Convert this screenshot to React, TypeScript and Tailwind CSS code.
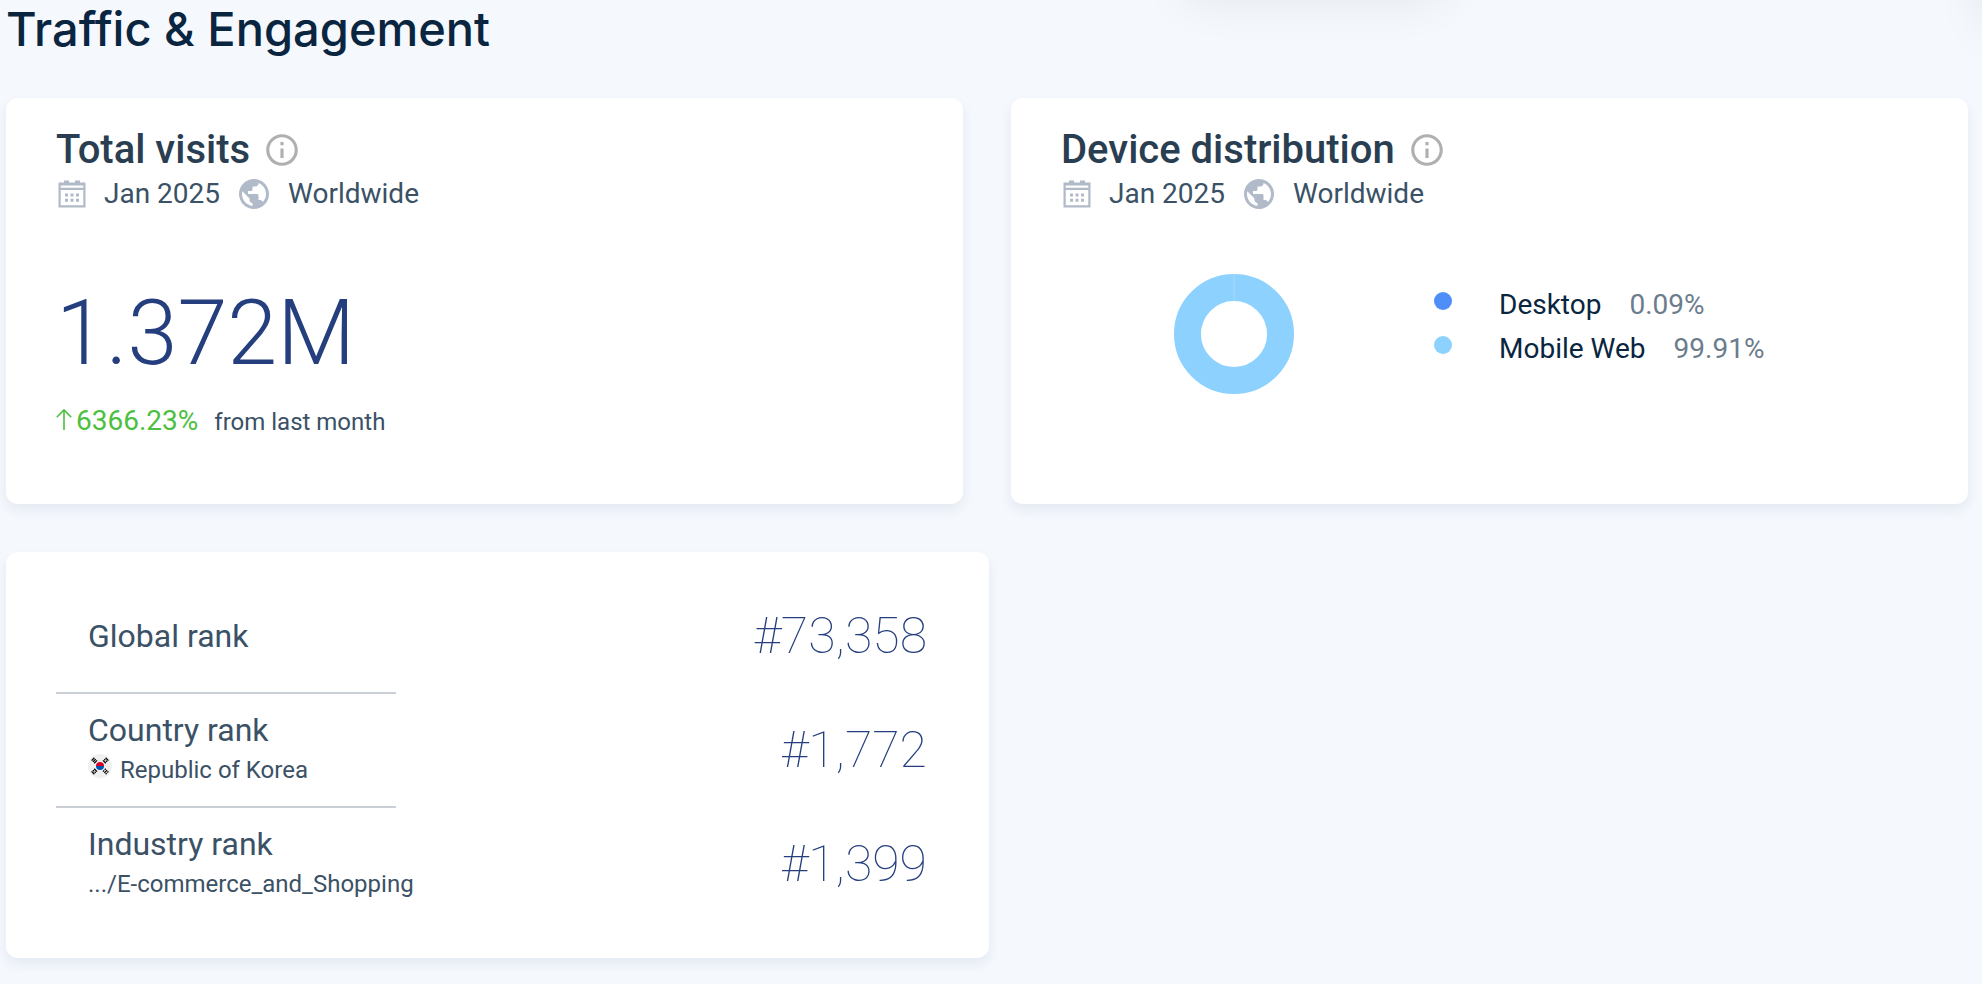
import type { ReactNode } from 'react'
import { MdInfoOutline, MdPublic } from 'react-icons/md'

interface Device {
  name: string
  share: string
  dotClass: string
}

interface Rank {
  label: string
  value: string
  detail?: string
  flag?: boolean
}

const devices: Device[] = [
  { name: 'Desktop', share: '0.09%', dotClass: 'bg-[#4f8df9]' },
  { name: 'Mobile Web', share: '99.91%', dotClass: 'bg-[#8dd1ff]' },
]

const ranks: Rank[] = [
  { label: 'Global rank', value: '#73,358' },
  { label: 'Country rank', value: '#1,772', detail: 'Republic of Korea', flag: true },
  { label: 'Industry rank', value: '#1,399', detail: '.../E-commerce_and_Shopping' },
]

function CalendarIcon() {
  return (
    <svg viewBox="0 0 32 32" className="w-8 h-8 flex-shrink-0" fill="#b0bac8" aria-hidden="true">
      <path
        fillRule="evenodd"
        d="M2.5 4.5H8V2.5h5v2h6v-2h5v2h5.5V29.5h-27zM4.7 7.5v2.2h22.6V7.5zM4.7 12v15.3h22.6V12z"
      />
      <path d="M9 15.5h3v3H9zM14.5 15.5h3v3h-3zM20 15.5h3v3h-3zM9 20.8h3v3H9zM14.5 20.8h3v3h-3zM20 20.8h3v3h-3z" />
    </svg>
  )
}

function KoreaFlag() {
  return (
    <svg viewBox="0 0 24 24" className="mt-1 w-6 h-6 flex-shrink-0" aria-hidden="true">
      <circle cx="12" cy="12" r="12" fill="#f0f0f0" />
      <path d="M8 12a4 4 0 0 1 8 0z" fill="#d80027" />
      <path d="M8 12a4 4 0 0 0 8 0z" fill="#0052b4" />
      <g stroke="#000" strokeWidth="1.3">
        <path d="M3.6 6.6l2.8-2.8M4.9 7.9l2.8-2.8M6.2 9.2l2.8-2.8" />
        <path d="M15 6.4l2.8 2.8M16.3 5.1l1.1 1.1M18 6.8l1.1 1.1M17.6 3.8l2.8 2.8" />
        <path d="M3.6 17.4l2.8 2.8M4.9 16.1L6 17.2M6.6 17.8l1.1 1.1M6.2 14.8L9 17.6" />
        <path d="M15 17.6l1.1-1.1M16.7 15.9l1.1-1.1M16.3 18.9l2.8-2.8M17.6 20.2l1.1-1.1M19.3 18.5l1.1-1.1" />
      </g>
    </svg>
  )
}

function Donut() {
  return (
    <svg viewBox="0 0 120 120" className="w-[120px] h-[120px] flex-shrink-0" aria-hidden="true">
      <circle cx="60" cy="60" r="46.5" fill="none" stroke="#8dd1ff" strokeWidth="27" />
      <path d="M60 0v27" stroke="#a9dbff" strokeWidth="1" />
    </svg>
  )
}

function Card({ className = '', children }: { className?: string; children: ReactNode }) {
  return (
    <section
      className={`rounded-xl bg-white px-[50px] shadow-[0_6px_12px_rgba(42,62,110,0.08)] ${className}`}
    >
      {children}
    </section>
  )
}

function CardHeader({ title }: { title: string }) {
  return (
    <header>
      <div className="flex items-center gap-[13px]">
        <h2 className="text-[40px] leading-[46px] font-medium text-[#2a3e52]">{title}</h2>
        <button type="button" aria-label={`About ${title}`}>
          <MdInfoOutline className="w-[38px] h-[38px] text-[#b0b0b0]" />
        </button>
      </div>
      <div className="flex items-center gap-4 text-[28px] leading-[42px] text-[#3a5166]">
        <CalendarIcon />
        <span>Jan 2025</span>
        <MdPublic className="w-9 h-9 text-[#b0bac8]" />
        <span>Worldwide</span>
      </div>
    </header>
  )
}

export default function App() {
  return (
    <main className="relative min-h-screen overflow-hidden bg-[#f5f8fd] pl-1.5 pr-3.5 pb-6 font-['Roboto',sans-serif]">
      {/* Shadows cast by the panels above the fold */}
      <div className="absolute -top-16 left-[1182px] w-[264px] h-16 rounded-3xl shadow-[0_0_48px_rgba(0,0,0,0.08)]" />
      <div className="absolute -top-16 -right-16 w-16 h-24 rounded-3xl shadow-[0_0_48px_rgba(0,0,0,0.08)]" />

      <h1 className="mb-10 font-['Inter',sans-serif] text-[47px] leading-[58px] font-medium text-[#092540]">
        Traffic &amp; Engagement
      </h1>

      <div className="grid grid-cols-2 gap-12">
        <Card className="min-h-[406px] pt-[29px]">
          <CardHeader title="Total visits" />
          <p className="mt-[67px] text-[90px] leading-[104px] font-light text-[#243e7e]">1.372M</p>
          <p className="mt-3.5 text-[28px] leading-[42px] text-[#4cc040]">
            <svg viewBox="0 0 16 22" className="mr-1 inline w-4 h-[22px] align-baseline" fill="none" stroke="#4cc040" strokeWidth="1.6" aria-hidden="true">
              <path d="M8 22V2M0.8 9.2L8 2l7.2 7.2" />
            </svg>
            6366.23%
            <span className="ml-4 text-[24px] text-[#3a5166]">from last month</span>
          </p>
        </Card>

        <Card className="min-h-[406px] pt-[29px]">
          <CardHeader title="Device distribution" />
          <div className="mt-[59px] flex items-center gap-[140px] pl-[113px]">
            <Donut />
            <ul className="pb-3.5 text-[28px] leading-[44px]">
              {devices.map(device => (
                <li key={device.name} className="flex">
                  <span className={`mt-[9px] mr-[47px] w-[18px] h-[18px] rounded-full ${device.dotClass}`} />
                  <span className="mr-7 text-[#092540]">{device.name}</span>
                  <span className="text-[#6b7c8c]">{device.share}</span>
                </li>
              ))}
            </ul>
          </div>
        </Card>
      </div>

      <Card className="mt-12 w-[calc(50%+2px)] min-h-[406px] pt-7">
        {ranks.map((rank, i) => (
          <div key={rank.label} className="flex items-center justify-between pr-3">
            <div
              className={`flex h-[114px] w-[340px] flex-col justify-center pl-8 whitespace-nowrap text-[#3a5166] border-b-2 ${
                i < ranks.length - 1 ? 'border-[#cbd0d7]' : 'border-transparent'
              }`}
            >
              <h3 className="text-[32px] leading-10">{rank.label}</h3>
              {rank.detail && (
                <p className="flex items-start gap-2 text-[24px] leading-10">
                  {rank.flag && <KoreaFlag />}
                  {rank.detail}
                </p>
              )}
            </div>
            <span className="pb-0.5 text-[50px] leading-[60px] font-thin text-[#243e7e]">{rank.value}</span>
          </div>
        ))}
      </Card>
    </main>
  )
}
